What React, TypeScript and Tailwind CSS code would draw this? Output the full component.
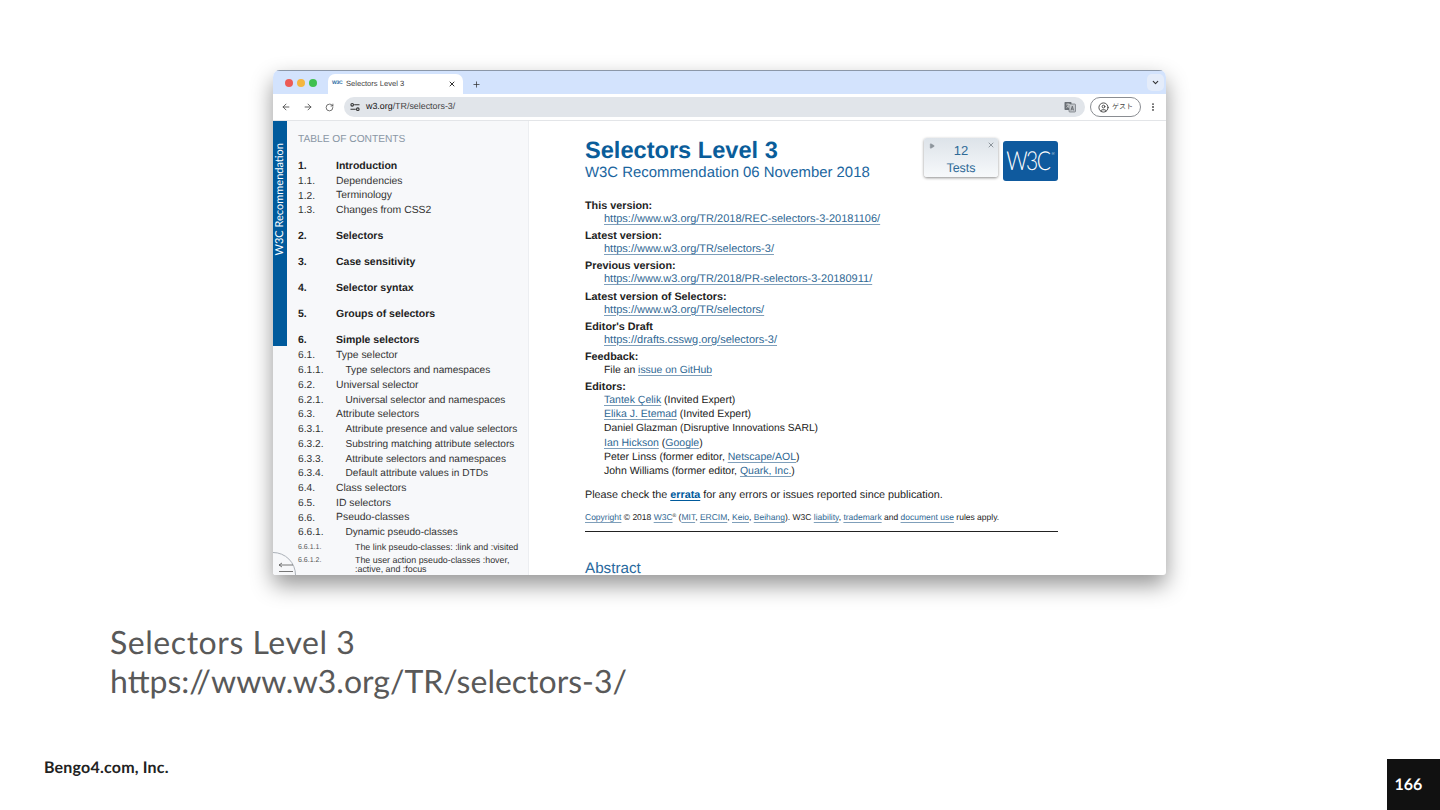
import {
  ArrowLeft,
  ArrowRight,
  ChevronDown,
  CircleUser,
  EllipsisVertical,
  Play,
  Plus,
  RotateCw,
  X,
} from "lucide-react";

type TocItem = { num: string; label: string; level: number; gap?: boolean };

const toc: TocItem[] = [
  { num: "1.", label: "Introduction", level: 0 },
  { num: "1.1.", label: "Dependencies", level: 1 },
  { num: "1.2.", label: "Terminology", level: 1 },
  { num: "1.3.", label: "Changes from CSS2", level: 1 },
  { num: "2.", label: "Selectors", level: 0, gap: true },
  { num: "3.", label: "Case sensitivity", level: 0, gap: true },
  { num: "4.", label: "Selector syntax", level: 0, gap: true },
  { num: "5.", label: "Groups of selectors", level: 0, gap: true },
  { num: "6.", label: "Simple selectors", level: 0, gap: true },
  { num: "6.1.", label: "Type selector", level: 1 },
  { num: "6.1.1.", label: "Type selectors and namespaces", level: 2 },
  { num: "6.2.", label: "Universal selector", level: 1 },
  { num: "6.2.1.", label: "Universal selector and namespaces", level: 2 },
  { num: "6.3.", label: "Attribute selectors", level: 1 },
  { num: "6.3.1.", label: "Attribute presence and value selectors", level: 2 },
  { num: "6.3.2.", label: "Substring matching attribute selectors", level: 2 },
  { num: "6.3.3.", label: "Attribute selectors and namespaces", level: 2 },
  { num: "6.3.4.", label: "Default attribute values in DTDs", level: 2 },
  { num: "6.4.", label: "Class selectors", level: 1 },
  { num: "6.5.", label: "ID selectors", level: 1 },
  { num: "6.6.", label: "Pseudo-classes", level: 1 },
  { num: "6.6.1.", label: "Dynamic pseudo-classes", level: 2 },
  { num: "6.6.1.1.", label: "The link pseudo-classes: :link and :visited", level: 3 },
  { num: "6.6.1.2.", label: "The user action pseudo-classes :hover, :active, and :focus", level: 3 },
];

const versions = [
  { label: "This version:", url: "https://www.w3.org/TR/2018/REC-selectors-3-20181106/" },
  { label: "Latest version:", url: "https://www.w3.org/TR/selectors-3/" },
  { label: "Previous version:", url: "https://www.w3.org/TR/2018/PR-selectors-3-20180911/" },
  { label: "Latest version of Selectors:", url: "https://www.w3.org/TR/selectors/" },
  { label: "Editor's Draft", url: "https://drafts.csswg.org/selectors-3/" },
];

function A({ children }: { children: React.ReactNode }) {
  return <span className="text-[#2f6894] underline underline-offset-2 decoration-[#7f9fba]">{children}</span>;
}

function TocRow({ item }: { item: TocItem }) {
  if (item.level === 0) {
    return (
      <div className={`flex h-[14.75px] items-center text-[10.5px] font-bold text-[#222] ${item.gap ? "mt-[11.3px]" : ""}`}>
        <span className="w-[38px] shrink-0">{item.num}</span>
        <span>{item.label}</span>
      </div>
    );
  }
  if (item.level === 3) {
    return (
      <div className="flex items-start pb-[1.5px] pt-[2.5px] text-[8.9px] leading-[9.2px] text-[#333]">
        <span className="w-[57px] shrink-0 text-[7px] text-[#555]">{item.num}</span>
        <span className="w-[172px]">{item.label}</span>
      </div>
    );
  }
  return (
    <div className="flex h-[14.75px] items-center text-[#333]">
      <span className={`shrink-0 text-[10.2px] ${item.level === 1 ? "w-[38px]" : "w-[47.5px]"}`}>{item.num}</span>
      <span className={item.level === 1 ? "text-[10.4px]" : "text-[10.1px]"}>{item.label}</span>
    </div>
  );
}

// Chrome's site-settings "tune" glyph
function TuneIcon() {
  return (
    <svg width="10" height="10" viewBox="0 0 10 10" fill="none" stroke="#333" strokeWidth="1.1">
      <circle cx="2.2" cy="2.8" r="1.3" />
      <path d="M4.2 2.8H9.5" />
      <path d="M0.5 7.2H5.8" />
      <circle cx="7.8" cy="7.2" r="1.3" />
    </svg>
  );
}

// Chrome's page-translate glyph
function TranslateIcon() {
  return (
    <svg width="12" height="12" viewBox="0 0 12 12">
      <rect x="0.5" y="1" width="7" height="8" rx="0.8" fill="#6b7076" />
      <rect x="5" y="3" width="6.5" height="8" rx="0.8" fill="#c4c8cd" stroke="#6b7076" strokeWidth="0.7" />
      <path d="M2.2 3.2H5.8M4 2.4V3.2M5 3.2C4.7 5 3.6 6.2 2.4 6.8M3 4.4C3.5 5.4 4.3 6.2 5.2 6.6" stroke="#fff" strokeWidth="0.6" fill="none" />
      <path d="M7 9.4L8.3 5.2L9.6 9.4M7.5 8.1H9.1" stroke="#4d5257" strokeWidth="0.7" fill="none" />
    </svg>
  );
}

export default function App() {
  return (
    <main className="relative h-[810px] w-[1440px] overflow-hidden bg-white font-['Liberation_Sans',sans-serif] [text-rendering:geometricPrecision]">
      <div className="ml-[273px] mt-[70px] h-[505px] w-[893px]">
        <div className="flex h-[505px] flex-col overflow-hidden rounded-t-[7px] rounded-b-[3px] bg-white shadow-[0_10px_22px_rgba(0,0,0,0.42)]">
          {/* tab strip */}
          <div className="flex h-[24px] shrink-0 items-end border-t border-[#8b97a8] bg-[#d3e3fd] pl-[12px]">
            <div className="flex h-[23px] items-center gap-[4px] pr-[11px]">
              <span className="h-[8px] w-[8px] rounded-full bg-[#ec5b56]" />
              <span className="h-[8px] w-[8px] rounded-full bg-[#f4b63f]" />
              <span className="h-[8px] w-[8px] rounded-full bg-[#3fc04f]" />
            </div>
            <div className="flex h-[20px] w-[135px] items-center rounded-t-[7px] bg-white pl-[4px] pr-[7px]">
              <span className="w-[14px] text-[5px] font-bold tracking-[-0.2px] text-[#2a6aa5]">W3C</span>
              <span className="flex-1 text-[7.6px] text-[#444]">Selectors Level 3</span>
              <X size={8} strokeWidth={3} className="text-[#333]" />
            </div>
            <div className="flex h-[20px] items-center pl-[9px]">
              <Plus size={9} strokeWidth={2} className="text-[#333]" />
            </div>
            <div className="mb-[3px] ml-auto mr-[2px] flex h-[17px] w-[17px] items-center justify-center rounded-[5px] bg-[#e4ecfa]">
              <ChevronDown size={9} strokeWidth={3} className="text-[#333]" />
            </div>
          </div>

          {/* toolbar */}
          <div className="flex h-[27px] shrink-0 items-center border-b border-[#e3e5e8] bg-white px-[8px]">
            <ArrowLeft size={10} className="text-[#444]" />
            <ArrowRight size={10} className="ml-[12px] text-[#444]" />
            <RotateCw size={9} className="ml-[12px] text-[#444]" />
            <div className="ml-[10px] flex h-[20px] w-[741px] items-center rounded-full bg-[#e1e5ea] pl-[6px] pr-[9px]">
              <TuneIcon />
              <span className="ml-[6px] text-[8.9px] text-[#444]">
                <span className="text-[#111]">w3.org</span>/TR/selectors-3/
              </span>
              <span className="ml-auto"><TranslateIcon /></span>
            </div>
            <div className="ml-[5px] flex h-[20px] w-[51px] items-center justify-center gap-[3px] rounded-full border border-[#8a8d92] text-[7px] text-[#444]">
              <CircleUser size={11} />
              <span className="font-['Noto_Sans_CJK_JP','Liberation_Sans',sans-serif]">ゲスト</span>
            </div>
            <EllipsisVertical size={10} strokeWidth={2.5} className="ml-[7px] text-[#444]" />
          </div>

          {/* page */}
          <div className="flex min-h-0 flex-1">
            <aside className="relative flex w-[256px] shrink-0 overflow-hidden border-r border-[#eceef1] bg-[#f7f8fa]">
              <div className="flex h-[225px] w-[14px] shrink-0 items-start justify-center bg-[#005a9c] pt-[22px]">
                <span className="rotate-180 whitespace-nowrap font-['Lato',sans-serif] text-[11px] text-white [writing-mode:vertical-rl]">W3C Recommendation</span>
              </div>
              <div className="pl-[11px] pt-[11px]">
                <div className="mb-[12px] text-[10.2px] text-[#8a97a5]">TABLE OF CONTENTS</div>
                {toc.map((item) => (
                  <TocRow key={item.num} item={item} />
                ))}
              </div>
              <div className="absolute bottom-[-23px] left-[-23px] h-[46px] w-[46px] rounded-full border border-[#aab0b7] bg-[#f7f8fa]">
                <svg width="16" height="12" viewBox="0 0 16 12" fill="none" stroke="#555" strokeWidth="0.8" className="absolute left-[27px] top-[8px]">
                  <path d="M1 4H15M1 4L4 2M1 4L4 6" />
                  <path d="M1 10.5H15" />
                </svg>
              </div>
            </aside>

            <section className="min-w-0 flex-1 overflow-hidden pl-[56px] pr-[108px] pt-[16px]">
              <header className="flex items-start justify-between">
                <div>
                  <h1 className="text-[23.6px] font-bold leading-[29px] text-[#0a5d9a]">Selectors Level 3</h1>
                  <div className="-mt-[1px] text-[14.9px] leading-[16px] text-[#1b66a0]">W3C Recommendation 06 November 2018</div>
                </div>
                <div className="flex items-start gap-[5px] pt-[1px]">
                  <div className="relative flex h-[39px] w-[74px] flex-col items-center rounded-[3px] bg-linear-to-b from-[#dde3e9] to-[#f7f9fb] pt-[5px] text-[#2f6a97] shadow-[0_1px_3px_rgba(0,0,0,0.45)]">
                    <Play size={6} className="absolute left-[5px] top-[5px] fill-[#8d959c] text-[#8d959c]" />
                    <X size={8} strokeWidth={3} className="absolute right-[3px] top-[3px] text-[#8d959c]" />
                    <span className="text-[13px] leading-[16px]">12</span>
                    <span className="mt-[1px] text-[12.5px] leading-[17px]">Tests</span>
                  </div>
                  <div className="mt-[3px] flex h-[40px] w-[55px] items-center justify-center rounded-[3px] bg-[#0f5a9e] pb-[1px] font-['Lato',sans-serif] text-[21px] font-light leading-none tracking-[-1.5px] text-white">
                    <span className="scale-y-125">W3C</span>
                    <sup className="ml-[2px] mt-[-10px] text-[4px] tracking-normal">®</sup>
                  </div>
                </div>
              </header>

              <div className="mt-[19px] text-[10.8px] leading-[13px] text-[#222]">
                {versions.map((v) => (
                  <div key={v.label} className="mb-[4.2px]">
                    <div className="font-bold">{v.label}</div>
                    <div className="pl-[19px] text-[11px]"><A>{v.url}</A></div>
                  </div>
                ))}
                <div className="mb-[4.2px]">
                  <div className="font-bold">Feedback:</div>
                  <div className="pl-[19px] text-[10.4px]">File an <A>issue on GitHub</A></div>
                </div>
                <div className="font-bold">Editors:</div>
                <div className="-mt-[1px] pl-[19px] text-[10.5px] leading-[14.25px]">
                  <div><A>Tantek Çelik</A> (Invited Expert)</div>
                  <div><A>Elika J. Etemad</A> (Invited Expert)</div>
                  <div className="text-[10.3px]">Daniel Glazman (Disruptive Innovations SARL)</div>
                  <div><A>Ian Hickson</A> (<A>Google</A>)</div>
                  <div>Peter Linss (former editor, <A>Netscape/AOL</A>)</div>
                  <div>John Williams (former editor, <A>Quark, Inc.</A>)</div>
                </div>
                <p className="mt-[10px]">
                  Please check the <b className="text-[#005a9c] underline underline-offset-2">errata</b> for any errors or issues reported since publication.
                </p>
                <p className="mt-[9px] text-[8.5px]">
                  <A>Copyright</A> © 2018 <A>W3C</A><sup className="text-[5px]">®</sup> (<A>MIT</A>, <A>ERCIM</A>, <A>Keio</A>, <A>Beihang</A>). W3C <A>liability</A>, <A>trademark</A> and <A>document use</A> rules apply.
                </p>
                <hr className="mt-[7px] border-t border-[#222]" />
                <h2 className="mt-[28px] text-[15.2px] leading-[18px] text-[#2a6a9e]">Abstract</h2>
              </div>
            </section>
          </div>
        </div>
      </div>

      {/* slide caption */}
      <div className="pl-[110px] pt-[47px] font-['Lato',sans-serif] text-[32px] leading-[39px] text-[#595959]">
        <div className="tracking-[0.55px]">Selectors Level 3</div>
        <div>https://www.w3.org/TR/selectors-3/</div>
      </div>

      <div className="absolute bottom-[30px] left-[44px] font-['Lato',sans-serif] text-[16px] font-bold tracking-[0.2px] text-[#222]">Bengo4.com, Inc.</div>
      <div className="absolute bottom-0 right-0 flex h-[51px] w-[53px] items-center bg-[#111] pl-[7.5px] font-['Lato',sans-serif] text-[16px] font-bold text-white">166</div>
    </main>
  );
}
